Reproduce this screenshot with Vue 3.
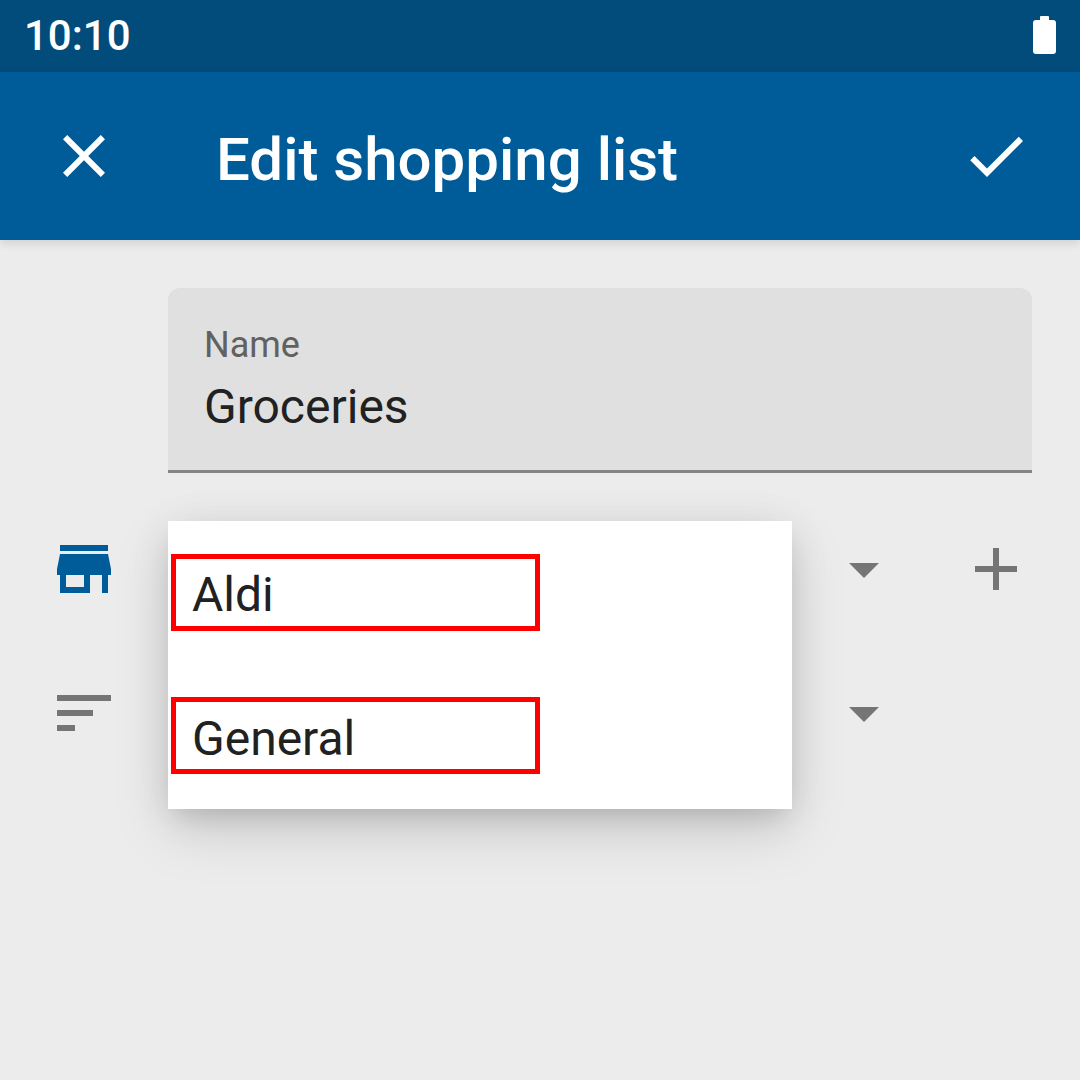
<script setup>
const items = ['Aldi', 'General']
</script>

<template>
  <div class="screen">
    <div class="status">
      <span class="time">10:10</span>
      <div class="battery"><i class="cap"></i><i class="cell"></i></div>
    </div>
    <header class="bar">
      <svg class="icon" viewBox="0 0 24 24"><path fill="#fff" d="M19 6.41L17.59 5 12 10.59 6.41 5 5 6.41 10.59 12 5 17.59 6.41 19 12 13.41 17.59 19 19 17.59 13.41 12z"/></svg>
      <h1 class="title">Edit shopping list</h1>
      <svg class="icon" viewBox="0 0 24 24"><path fill="#fff" d="M9 16.17L4.83 12l-1.42 1.41L9 19 21 7l-1.41-1.41z"/></svg>
    </header>
    <main class="form">
      <div class="field">
        <div class="label">Name</div>
        <div class="value">Groceries</div>
      </div>
      <div class="row first">
        <svg class="icon" viewBox="0 0 24 24"><path fill="#005c99" d="M20 4H4v2h16V4zm1 10v-2l-1-5H4l-1 5v2h1v6h10v-6h4v6h2v-6h1zm-9 4H6v-4h6v4z"/></svg>
        <svg class="icon arrow" viewBox="0 0 24 24"><path fill="#757575" d="M7 10l5 5 5-5z"/></svg>
        <svg class="icon add" viewBox="0 0 24 24"><path fill="#757575" d="M19 13h-6v6h-2v-6H5v-2h6V5h2v6h6v2z"/></svg>
      </div>
      <div class="row">
        <svg class="icon" viewBox="0 0 24 24"><path fill="#757575" d="M3 18h6v-2H3v2zM3 6v2h18V6H3zm0 7h12v-2H3v2z"/></svg>
        <svg class="icon arrow" viewBox="0 0 24 24"><path fill="#757575" d="M7 10l5 5 5-5z"/></svg>
      </div>
      <div class="menu">
        <div v-for="item in items" :key="item" class="item">
          <div class="mark">{{ item }}</div>
        </div>
      </div>
    </main>
  </div>
</template>

<style>
html, body { margin: 0; padding: 0; }
</style>

<style scoped>
.screen {
  width: 1080px;
  height: 1080px;
  overflow: hidden;
  background: #ececec;
  display: flex;
  flex-direction: column;
  font-family: Roboto, "Liberation Sans", sans-serif;
  color: #212121;
}
.status {
  height: 72px;
  flex: none;
  background: #024c7b;
  display: flex;
  align-items: center;
  justify-content: space-between;
  padding: 0 24px 0 24px;
  box-sizing: border-box;
}
.time {
  color: #fff;
  font-size: 42px;
  font-weight: 500;
  line-height: 76px;
}
.battery {
  width: 23px;
  height: 38px;
  display: flex;
  flex-direction: column;
  align-items: center;
  margin-top: -2px;
}
.cap { display: block; width: 9px; height: 4px; background: #fff; border-radius: 1px 1px 0 0; }
.cell { display: block; width: 23px; height: 34px; background: #fff; border-radius: 3px; }
.bar {
  height: 168px;
  flex: none;
  background: #005c99;
  display: flex;
  align-items: center;
  padding: 0 48px;
  box-sizing: border-box;
  box-shadow: 0 3px 9px rgba(0, 0, 0, 0.12);
  position: relative;
  z-index: 1;
}
.icon { width: 72px; height: 72px; display: block; flex: none; }
.title {
  flex: 1;
  margin: 0 0 0 96px;
  padding-top: 8px;
  color: #fff;
  font-size: 60px;
  font-weight: 500;
  line-height: 72px;
}
.form {
  flex: 1;
  position: relative;
  padding: 48px 48px 0 48px;
}
.field {
  margin-left: 120px;
  height: 185px;
  box-sizing: border-box;
  background: #e0e0e0;
  border-radius: 12px 12px 0 0;
  border-bottom: 3px solid #858585;
  padding: 36px 36px 0;
}
.label { font-size: 36px; line-height: 42px; color: #616161; }
.value { font-size: 48px; line-height: 56px; margin-top: 13px; color: #212121; }
.row {
  display: flex;
  height: 72px;
  margin-top: 72px;
}
.row.first { margin-top: 60px; }
.arrow { margin-left: 708px; }
.add { margin-left: 60px; }
.menu {
  position: absolute;
  left: 168px;
  top: 281px;
  width: 624px;
  height: 288px;
  background: #fff;
  box-shadow: 0 12px 24px -8px rgba(0, 0, 0, 0.12), 0 22px 54px 0 rgba(0, 0, 0, 0.13), 0 6px 42px 0 rgba(0, 0, 0, 0.07);
}
.item {
  height: 143px;
  box-sizing: border-box;
  padding: 33px 252px 0 3px;
}
.item:last-child .mark { padding-top: 1px; }
.mark {
  height: 77px;
  box-sizing: border-box;
  border: 5px solid #f00;
  padding-left: 16px;
  font-size: 48px;
  line-height: 72px;
  color: #212121;
}
</style>
